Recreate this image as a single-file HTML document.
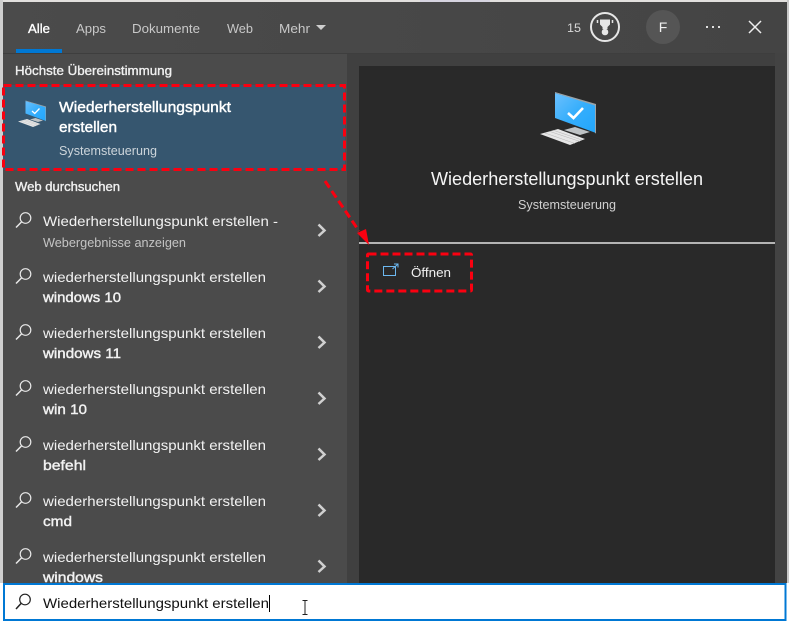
<!DOCTYPE html>
<html><head><meta charset="utf-8"><style>
html,body{margin:0;padding:0;background:#fff;width:789px;height:621px;overflow:hidden}
svg{display:block}
text{font-family:"Liberation Sans",sans-serif;}
</style></head><body>
<svg width="789" height="621" viewBox="0 0 789 621" xmlns="http://www.w3.org/2000/svg">
<defs>
<linearGradient id="hd" x1="0" x2="1" y1="0" y2="0"><stop offset="0" stop-color="#4b4b4b"/><stop offset="1" stop-color="#444"/></linearGradient>
<linearGradient id="mon" x1="0" x2="1" y1="0" y2="1"><stop offset="0" stop-color="#6cc0fd"/><stop offset=".5" stop-color="#35aefc"/><stop offset="1" stop-color="#22a6fb"/></linearGradient>
<g id="s"><circle cx="9.5" cy="-9.5" r="5.3" fill="none" stroke="#e8e8e8" stroke-width="1.2"/><path d="M5.6 -5.6L0 0" stroke="#e8e8e8" stroke-width="1.5" fill="none"/></g>
<path id="c" d="M-3.500 -5.500L2.500 .5L-3.500 6" fill="none" stroke="#d0d0d0" stroke-width="2.500"/>
<g id="pc">
<path d="M9 38L20 35L35 40L25 43Z" fill="#bfc3c5"/>
<path d="M0 1L41 13V41L0 26Z" fill="url(#mon)"/>
<path d="M0 1L0 0L41 12V41.500L40 41V13.500Z" fill="#9aa3a8"/>
<path d="M13 21L18.500 26L28 16" fill="none" stroke="#fff" stroke-width="2.600"/>
<path d="M-15 42L3 37L30 47L15 53Z" fill="#e6e6e6"/>
<path d="M-10 41L20 51.500M-5 39.500L25 49.500M-1 38.500L27 48" stroke="#b4b4b4" stroke-width=".5"/>
</g>
</defs>
<rect width="789" height="621" fill="#fff"/>
<rect x="0" y="0" width="789" height="2" fill="#e2e0de"/>
<rect x="420" y="0" width="70" height="2" fill="#d6d4e0"/>
<rect x="0" y="0" width="3" height="583" fill="#cfcfcf"/>
<rect x="787" y="0" width="2" height="583" fill="#c8c8c8"/>
<rect x="3" y="2" width="784" height="581" fill="#474747"/>
<rect x="3" y="2" width="784" height="51" fill="url(#hd)"/>
<rect x="3" y="53" width="344" height="530" fill="#4b4b4b"/>
<rect x="347" y="53" width="440" height="530" fill="#404040"/>
<rect x="3" y="53" width="784" height="1" fill="#3e3e3e"/>
<rect x="775" y="53" width="12" height="530" fill="#434343"/>
<rect x="359" y="66" width="416" height="517" fill="#292929"/>

<rect x="16" y="49" width="46" height="4" fill="#0078d4"/>
<text x="28" y="33" font-size="13" fill="#fff" stroke="#fff" stroke-width=".35" textLength="22" lengthAdjust="spacingAndGlyphs">Alle</text>
<g font-size="13" fill="#c8c8c8">
<text x="76" y="33" textLength="30" lengthAdjust="spacingAndGlyphs">Apps</text>
<text x="132" y="33" textLength="68" lengthAdjust="spacingAndGlyphs">Dokumente</text>
<text x="227" y="33" textLength="26" lengthAdjust="spacingAndGlyphs">Web</text>
<text x="279" y="33" textLength="31" lengthAdjust="spacingAndGlyphs">Mehr</text>
</g>
<path d="M316 25H326L321 30Z" fill="#cfcfcf"/>

<text x="567" y="32" font-size="12" fill="#d8d8d8" textLength="14" lengthAdjust="spacingAndGlyphs">15</text>
<circle cx="605" cy="27" r="14" fill="none" stroke="#e6e6e6" stroke-width="2"/>
<path d="M600 19.500H610V24.500L607.500 27V29H602.500V27L600 24.500Z" fill="#e6e6e6"/>
<circle cx="605" cy="32" r="3.300" fill="#e6e6e6"/>
<path d="M597.500 20V23M612.500 20V23" stroke="#e6e6e6" stroke-width="1.500"/>
<circle cx="663" cy="27" r="17" fill="#555"/>
<text x="663" y="32" font-size="14" fill="#f0f0f0" text-anchor="middle">F</text>
<g fill="#e0e0e0"><rect x="706" y="26" width="2" height="2"/><rect x="712" y="26" width="2" height="2"/><rect x="718" y="26" width="2" height="2"/></g>
<path d="M749 21L761 33M761 21L749 33" stroke="#eee" stroke-width="1.500" fill="none"/>

<text x="15" y="75" font-size="12.500" fill="#f0f0f0" stroke="#f0f0f0" stroke-width=".35" textLength="157" lengthAdjust="spacingAndGlyphs">Höchste Übereinstimmung</text>
<rect x="3" y="85" width="342" height="85" fill="#36566f"/>
<use href="#pc" transform="translate(25.500,100.500) scale(.5)"/>
<text x="59" y="112" font-size="14.500" fill="#fff" stroke="#fff" stroke-width=".4" textLength="172" lengthAdjust="spacingAndGlyphs">Wiederherstellungspunkt</text>
<text x="59" y="132" font-size="14.500" fill="#fff" stroke="#fff" stroke-width=".4" textLength="58" lengthAdjust="spacingAndGlyphs">erstellen</text>
<text x="59" y="155" font-size="13" fill="#cdd5db" textLength="98" lengthAdjust="spacingAndGlyphs">Systemsteuerung</text>
<text x="15" y="191" font-size="12.500" fill="#f0f0f0" stroke="#f0f0f0" stroke-width=".35" textLength="105" lengthAdjust="spacingAndGlyphs">Web durchsuchen</text>

<g font-size="14" fill="#f2f2f2">
<text x="43" y="226" textLength="235" lengthAdjust="spacingAndGlyphs">Wiederherstellungspunkt erstellen -</text>
<text x="43" y="247" font-size="13" fill="#c4c4c4" textLength="143" lengthAdjust="spacingAndGlyphs">Webergebnisse anzeigen</text>
<text x="43" y="282" textLength="223" lengthAdjust="spacingAndGlyphs">wiederherstellungspunkt erstellen</text>
<text x="43" y="302" stroke="#f2f2f2" stroke-width=".4" textLength="78" lengthAdjust="spacingAndGlyphs">windows 10</text>
<text x="43" y="338" textLength="223" lengthAdjust="spacingAndGlyphs">wiederherstellungspunkt erstellen</text>
<text x="43" y="358" stroke="#f2f2f2" stroke-width=".4" textLength="78" lengthAdjust="spacingAndGlyphs">windows 11</text>
<text x="43" y="394" textLength="223" lengthAdjust="spacingAndGlyphs">wiederherstellungspunkt erstellen</text>
<text x="43" y="414" stroke="#f2f2f2" stroke-width=".4" textLength="44" lengthAdjust="spacingAndGlyphs">win 10</text>
<text x="43" y="450" textLength="223" lengthAdjust="spacingAndGlyphs">wiederherstellungspunkt erstellen</text>
<text x="43" y="470" stroke="#f2f2f2" stroke-width=".4" textLength="43" lengthAdjust="spacingAndGlyphs">befehl</text>
<text x="43" y="506" textLength="223" lengthAdjust="spacingAndGlyphs">wiederherstellungspunkt erstellen</text>
<text x="43" y="526" stroke="#f2f2f2" stroke-width=".4" textLength="29" lengthAdjust="spacingAndGlyphs">cmd</text>
<text x="43" y="562" textLength="223" lengthAdjust="spacingAndGlyphs">wiederherstellungspunkt erstellen</text>
<text x="43" y="582" stroke="#f2f2f2" stroke-width=".4" textLength="60" lengthAdjust="spacingAndGlyphs">windows</text>
</g>
<use href="#s" x="16" y="227.500"/><use href="#s" x="16" y="283.500"/><use href="#s" x="16" y="339.500"/><use href="#s" x="16" y="395.500"/><use href="#s" x="16" y="451.500"/><use href="#s" x="16" y="507.500"/><use href="#s" x="16" y="563.500"/>
<use href="#c" x="322" y="230"/><use href="#c" x="322" y="286"/><use href="#c" x="322" y="342"/><use href="#c" x="322" y="398"/><use href="#c" x="322" y="454"/><use href="#c" x="322" y="510"/><use href="#c" x="322" y="566"/>

<use href="#pc" transform="translate(555,92)"/>
<text x="431" y="185" font-size="18" fill="#f5f5f5" textLength="272" lengthAdjust="spacingAndGlyphs">Wiederherstellungspunkt erstellen</text>
<text x="518" y="209" font-size="13" fill="#d0d0d0" textLength="98" lengthAdjust="spacingAndGlyphs">Systemsteuerung</text>
<rect x="359" y="242" width="416" height="2" fill="#b4b4b4"/>
<path d="M383.500 266.500H395.500V275.500H383.500Z" fill="none" stroke="#6cb8f0" stroke-width="1"/>
<path d="M392.500 269L397.500 264.500M394 264H398V267.500" fill="none" stroke="#6cb8f0" stroke-width="1"/>
<text x="411" y="277" font-size="13" fill="#f0f0f0" textLength="40" lengthAdjust="spacingAndGlyphs">Öffnen</text>

<rect x="3.500" y="85.500" width="341" height="84" fill="none" stroke="#fa0010" stroke-width="3" stroke-dasharray="8 4"/>
<rect x="367.500" y="254" width="104" height="37" rx="1" fill="none" stroke="#fa0010" stroke-width="3" stroke-dasharray="8 4"/>
<path d="M325 181L359 231" stroke="#fa0010" stroke-width="3" stroke-dasharray="8 4" fill="none"/>
<path d="M369 245L357 233L366 229Z" fill="#fa0010"/>

<rect x="4" y="584" width="781.500" height="36" fill="#fff" stroke="#0078d4" stroke-width="2"/>
<g><circle cx="25" cy="599.500" r="5.300" fill="none" stroke="#222" stroke-width="1.200"/><path d="M21 603.500L16 609" stroke="#222" stroke-width="1.500"/></g>
<text x="43" y="608" font-size="14" fill="#111" textLength="226" lengthAdjust="spacingAndGlyphs">Wiederherstellungspunkt erstellen</text>
<rect x="269" y="595" width="1" height="17" fill="#000"/>
<path d="M302.500 600.500H307.500M305 600.500V614.500M302.500 614.500H307.500" stroke="#222" stroke-width="1" fill="none"/>
</svg>
</body></html>
